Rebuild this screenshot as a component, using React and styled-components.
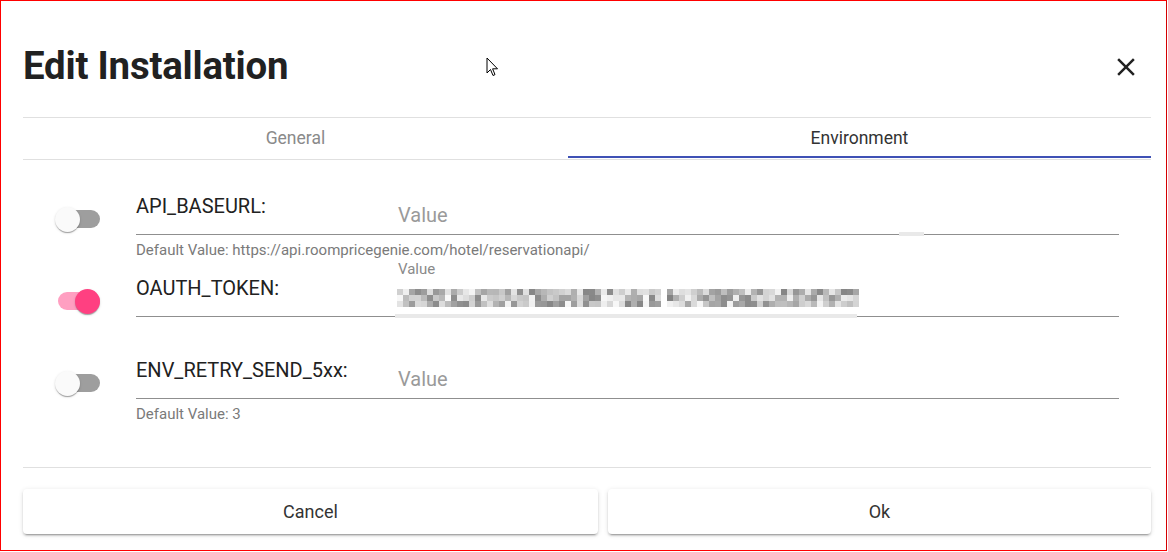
import React from "react";
import styled, { createGlobalStyle } from "styled-components";

const GlobalStyle = createGlobalStyle`
  html, body {
    margin: 0;
    background: #fff;
    font-family: Roboto, "Liberation Sans", sans-serif;
  }
`;

const Frame = styled.div`
  position: relative;
  box-sizing: border-box;
  width: 1167px;
  height: 551px;
  border: 1px solid #ff0000;
  border-right-color: #d40000;
  padding: 0 15px 0 22px;
  display: flex;
  flex-direction: column;
  background: #fff;
`;

const Header = styled.div`
  box-sizing: border-box;
  height: 116px;
  padding-top: 43px;
  display: flex;
  align-items: flex-start;
  justify-content: space-between;
`;

const Title = styled.h1`
  margin: 0;
  font-size: 38.4px;
  line-height: 44px;
  font-weight: 700;
  color: #212121;
  letter-spacing: -0.2px;
`;

const CloseButton = styled.button`
  border: 0;
  background: none;
  padding: 0;
  margin: 8px 10px 0 0;
  width: 30px;
  height: 30px;
  color: #212121;
  cursor: pointer;
  svg {
    display: block;
  }
`;

const TabBar = styled.div`
  display: flex;
  border-top: 1px solid #e0e0e0;
  border-bottom: 1px solid #e0e0e0;
  padding-bottom: 1px;
`;

const Tab = styled.div`
  position: relative;
  flex: 1 1 auto;
  height: 40px;
  display: flex;
  align-items: center;
  justify-content: center;
  font-size: 17.5px;
  color: ${(p) => (p.$active ? "#333" : "#8a8a8a")};

  &::after {
    content: "";
    position: absolute;
    left: 0;
    right: 0;
    bottom: 0;
    height: 2px;
    background: ${(p) => (p.$active ? "#3f51b5" : "transparent")};
  }
`;

const Content = styled.div`
  flex: 1;
  padding-top: 26px;
`;

const Row = styled.div`
  display: flex;
  height: 82px;
`;

const SwitchCell = styled.div`
  width: 81px;
  padding-left: 32px;
`;

const Switch = styled.div`
  position: relative;
  width: 46px;
  height: 25px;
  margin-top: 20.5px;
`;

const Track = styled.div`
  position: absolute;
  left: 3px;
  top: 3.75px;
  width: 42px;
  height: 17.5px;
  border-radius: 9px;
  background: ${(p) => (p.$on ? "#ff9fc1" : "#9e9e9e")};
`;

const Thumb = styled.div`
  position: absolute;
  top: 0;
  left: ${(p) => (p.$on ? "20px" : "0")};
  width: 25px;
  height: 25px;
  border-radius: 50%;
  background: ${(p) => (p.$on ? "#ff4081" : "#fafafa")};
  box-shadow: 0 2px 1px -1px rgba(0, 0, 0, 0.2), 0 1px 1px 0 rgba(0, 0, 0, 0.14),
    0 1px 3px 0 rgba(0, 0, 0, 0.12);
`;

const Field = styled.div`
  width: 983px;
`;

const InputLine = styled.div`
  position: relative;
  height: 48px;
  display: flex;
  align-items: flex-end;
  border-bottom: 1px solid #8f8f8f;
`;

const Label = styled.div`
  align-self: flex-start;
  width: 259px;
  margin-top: 8px;
  font-size: 20px;
  line-height: 24px;
  color: #212121;
`;

const Input = styled.div`
  flex: 1;
  padding: 0 0 ${(p) => (p.$filled ? "7px" : "7.5px")} 3px;
  font-size: 20px;
  line-height: 24px;
  color: #9a9a9a;
`;

const FloatLabel = styled.div`
  position: absolute;
  left: 262px;
  top: -8px;
  font-size: 15px;
  line-height: 18px;
  color: #8a8a8a;
`;

const Mask = styled.div`
  display: flex;
  flex-direction: column;
  width: 462px;
  margin: 0 0 2px -1px;
`;

const MaskRow = styled.div`
  display: flex;
  height: 6px;
`;

const Block = styled.span`
  width: 6px;
  height: 6px;
  background: rgb(${(p) => p.$g}, ${(p) => p.$g}, ${(p) => p.$g});
`;

const Glare = styled.span`
  position: absolute;
  bottom: -2px;
  left: ${(p) => p.$left}px;
  width: ${(p) => p.$width}px;
  height: 4px;
  background: #e9e9e9;
`;

const Helper = styled.div`
  margin-top: 6px;
  font-size: 15px;
  line-height: 18px;
  color: #7a7a7a;
`;

const Footer = styled.div`
  border-top: 1px solid #e0e0e0;
  padding: 21px 0 16px;
  display: grid;
  grid-template-columns: 575fr 543fr;
  gap: 10px;
`;

const Button = styled.button`
  height: 45px;
  border: 0;
  border-radius: 4px;
  background: #fff;
  font-family: Roboto, "Liberation Sans", sans-serif;
  font-size: 18px;
  color: #333;
  cursor: pointer;
  box-shadow: 0 3px 1px -2px rgba(0, 0, 0, 0.2), 0 2px 2px 0 rgba(0, 0, 0, 0.14),
    0 1px 5px 0 rgba(0, 0, 0, 0.12);
`;

const Cursor = styled.svg`
  position: absolute;
  left: 485px;
  top: 56px;
`;

function makeMask() {
  let seed = 11;
  const rand = () => {
    seed = (seed * 9301 + 49297) % 233280;
    return seed / 233280;
  };
  return [0, 1, 2].map(() =>
    Array.from({ length: 77 }, (_, i) => {
      if (i === 44) return 255;
      const r = rand();
      return Math.round(130 + r * 120);
    })
  );
}

const mask = makeMask();

const rows = [
  { name: "API_BASEURL:", on: false, helper: "Default Value: https://api.roompricegenie.com/hotel/reservationapi/", glare: [763, 25] },
  { name: "OAUTH_TOKEN:", on: true, token: true, glare: [259, 462] },
  { name: "ENV_RETRY_SEND_5xx:", on: false, helper: "Default Value: 3" },
];

export default function App() {
  return (
    <>
      <GlobalStyle />
      <Frame>
        <Header>
          <Title>Edit Installation</Title>
          <CloseButton aria-label="close">
            <svg width="30" height="30" viewBox="0 0 24 24" fill="currentColor">
              <path d="M19 6.41L17.59 5 12 10.59 6.41 5 5 6.41 10.59 12 5 17.59 6.41 19 12 13.41 17.59 19 19 17.59 13.41 12z" />
            </svg>
          </CloseButton>
        </Header>
        <TabBar>
          <Tab>General</Tab>
          <Tab $active>Environment</Tab>
        </TabBar>
        <Content>
          {rows.map((r) => (
            <Row key={r.name}>
              <SwitchCell>
                <Switch>
                  <Track $on={r.on} />
                  <Thumb $on={r.on} />
                </Switch>
              </SwitchCell>
              <Field>
                <InputLine>
                  <Label>{r.name}</Label>
                  {r.token ? (
                    <>
                      <FloatLabel>Value</FloatLabel>
                      <Input $filled>
                        <Mask>
                          {mask.map((line, i) => (
                            <MaskRow key={i}>
                              {line.map((g, j) => (
                                <Block key={j} $g={g} />
                              ))}
                            </MaskRow>
                          ))}
                        </Mask>
                      </Input>
                    </>
                  ) : (
                    <Input>Value</Input>
                  )}
                  {r.glare && <Glare $left={r.glare[0]} $width={r.glare[1]} />}
                </InputLine>
                {r.helper && <Helper>{r.helper}</Helper>}
              </Field>
            </Row>
          ))}
        </Content>
        <Footer>
          <Button>Cancel</Button>
          <Button>Ok</Button>
        </Footer>
        <Cursor width="13" height="21" viewBox="0 0 13 21">
          <path d="M1 1 L1 16 L4.5 12.5 L7 18.5 L9 17.6 L6.6 11.8 L11.5 11.8 Z" fill="#fff" stroke="#000" strokeWidth="1" strokeLinejoin="round" />
        </Cursor>
      </Frame>
    </>
  );
}
